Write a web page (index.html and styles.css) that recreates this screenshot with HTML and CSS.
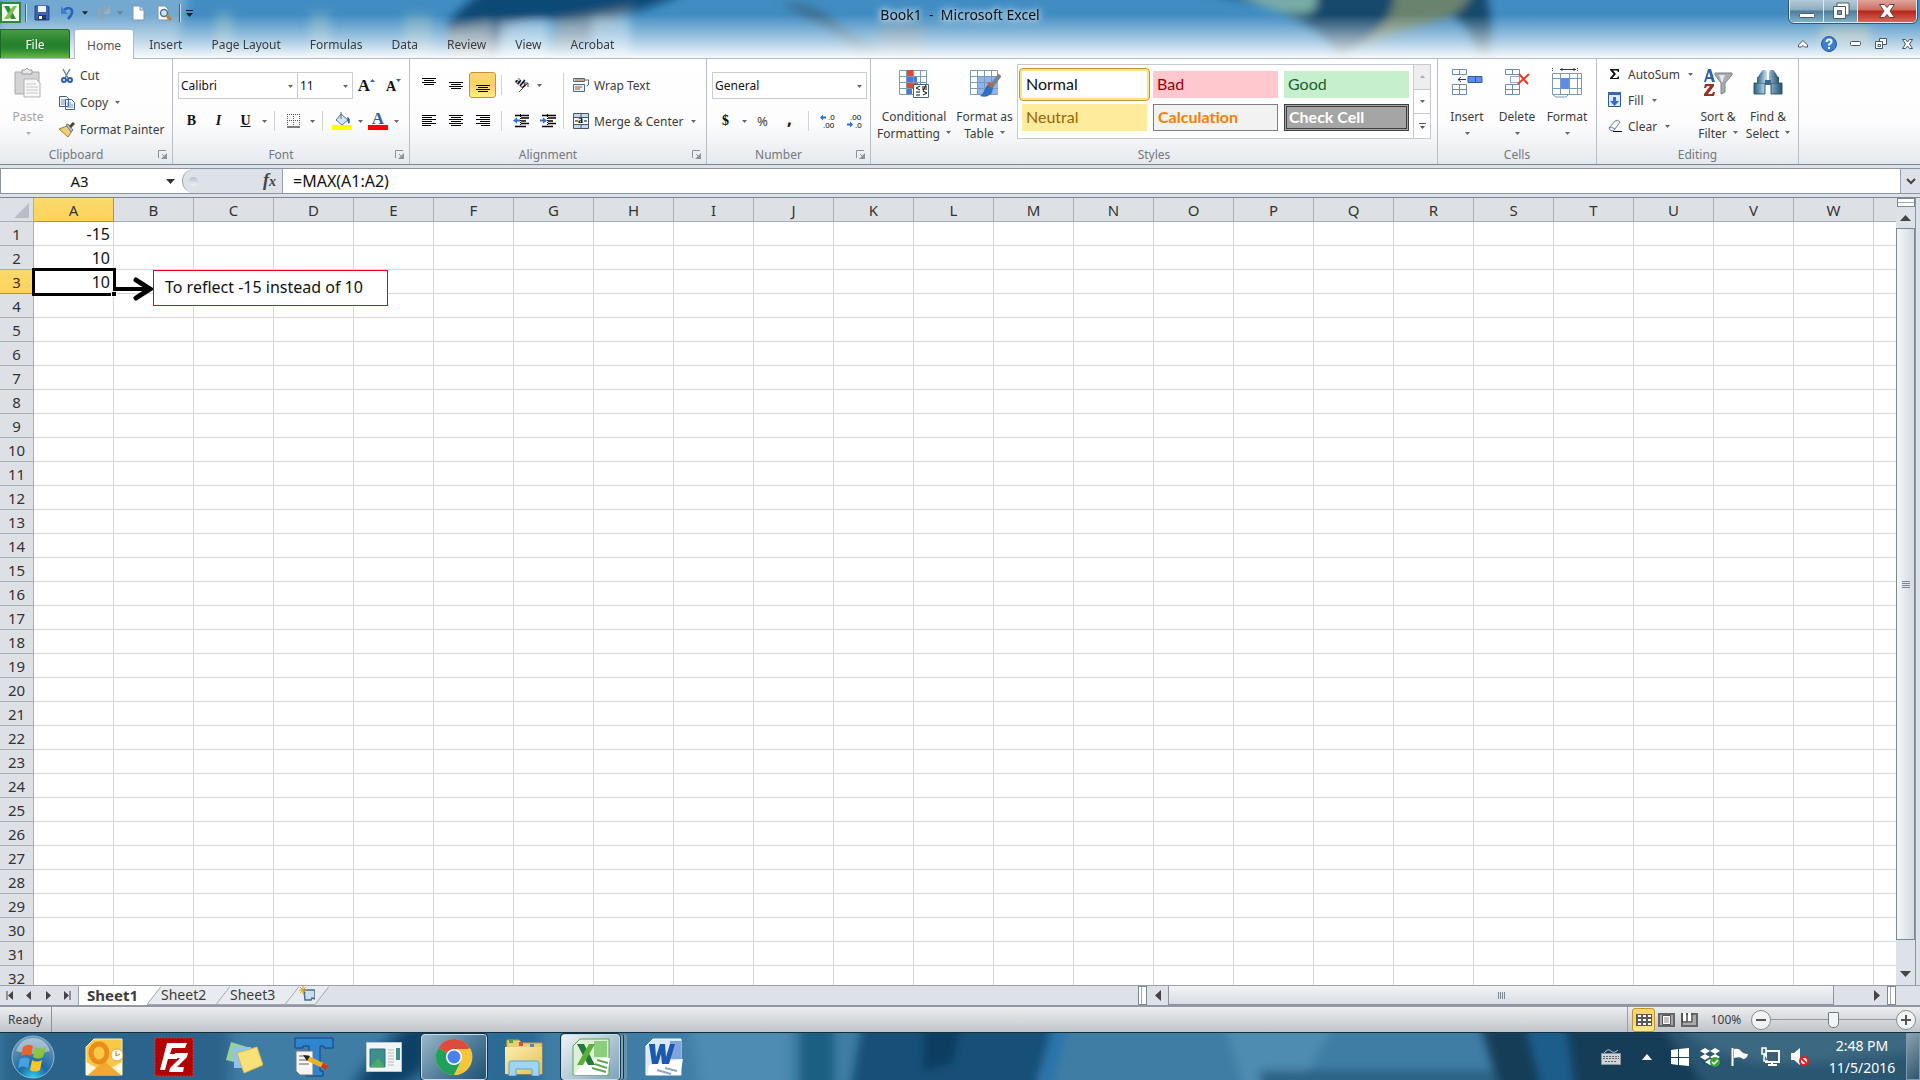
FILE: index.html
```html
<!DOCTYPE html>
<html lang="en">
<head>
    <meta charset="UTF-8">
    <title>Book1 - Microsoft Excel</title>
    <link rel="stylesheet" href="styles.css">
</head>
<body>
    <!-- shared icons -->
    <svg class="defs" aria-hidden="true">
        <defs>
            <symbol id="caret" viewBox="0 0 5 3"><path d="M0 0h5L2.500 3z" fill="#666"/></symbol>
            <symbol id="launcher" viewBox="0 0 10 10"><path d="M.5 8V.5H8" fill="none" stroke="#8b9099"/><path d="M4 4l2 2" stroke="#8b9099"/><path d="M9 3v6H3z" fill="#8b9099"/></symbol>
            <linearGradient id="steel" x1="0" y1="0" x2="1" y2="0"><stop offset="0" stop-color="#2c5f83"/><stop offset=".4" stop-color="#bcd9ea"/><stop offset="1" stop-color="#24506f"/></linearGradient>
            <linearGradient id="folder" x1="0" y1="0" x2="1" y2="1"><stop offset="0" stop-color="#fbeeb0"/><stop offset="1" stop-color="#e6bf57"/></linearGradient>
            <filter id="soft" x="-20%" y="-50%" width="140%" height="200%"><feGaussianBlur stdDeviation="7"/></filter>
            <filter id="soft2" x="-20%" y="-50%" width="140%" height="200%"><feGaussianBlur stdDeviation="5"/></filter>
        </defs>
    </svg>

    <header class="window_top">
        <svg class="glass" viewBox="0 0 1920 58" preserveAspectRatio="none" aria-hidden="true">
            <defs>
                <linearGradient id="fade" x1="0" y1="0" x2="0" y2="1"><stop offset=".25" stop-color="#fff" stop-opacity="0"/><stop offset=".7" stop-color="#fff" stop-opacity=".55"/><stop offset="1" stop-color="#fff" stop-opacity=".95"/></linearGradient>
            </defs>
            <rect width="1920" height="58" fill="#418dc3"/>
            <g filter="url(#soft2)">
                <path d="M0 -10h190l-20 80H0z" fill="#7fb0d3" opacity=".8"/>
                <path d="M215 12h18v50h-18zM310 12h20v50h-20zM404 14h28v50h-28z" fill="#9cc0bf" opacity=".4"/>
                <path d="M448 70V22C470 0 480 -10 490 -10H690C650 10 600 24 560 20 522 16 500 20 496 70z" fill="#0d4a74"/>
                <path d="M448 70V30l44-10v50zM556 20l80-14-40 30-40 20z" fill="#6f8796" opacity=".8"/>
                <path d="M500 22h48v50h-48zM592 18h38v40h-38z" fill="#a9cee4" opacity=".6"/>
                <path d="M780 4q30-4 50 14t50 32l-20 6q-20-22-44-34z" fill="#3d6f90"/>
                <path d="M880 24h44v36h-44z" fill="#6d8797" opacity=".6"/>
                <path d="M1195 -10h290q10 30 4 70h-10q-10-40-30-44-60 8-110 44-20-50-144-70z" fill="#12486c"/>
                <path d="M1235 -10h80q8 24-16 24-30 0-64-24z" fill="#79aba5"/>
                <path d="M1395 -10h78q-10 28-46 34-50 14-80 30 50-30 48-64z" fill="#6a836e"/>
                <path d="M1820 26h50v20h-50z" fill="#a8b7a5" opacity=".6"/>
            </g>
            <rect width="1920" height="58" fill="url(#fade)"/>
        </svg>

        <div class="title_bar">
            <div class="quick_bar">
                <svg width="22" height="22" viewBox="0 0 22 22"><rect x="1" y="1" width="19" height="19" fill="#f4faf2" stroke="#2c8a35" stroke-width="2"/><path d="M4 4h5l7 13h-5z" fill="#2d8f3c"/><path d="M13 4h4L9 17H4z" fill="#86c05a"/></svg>
                <i class="bar_line"></i>
                <button class="quick_btn" aria-label="Save"><svg width="16" height="16" viewBox="0 0 16 16"><path d="M1 1h13l1 1v13H1z" fill="#3c63b4" stroke="#24418a"/><path d="M4 1h8v6H4z" fill="#eef4fc"/><path d="M4 10h8v5H4z" fill="#1f3470"/><path d="M5 11h3v3H5z" fill="#fff"/></svg></button>
                <button class="quick_btn" aria-label="Undo"><svg width="16" height="16" viewBox="0 0 16 16"><path d="M4 5c5-4 9-1 8 3-1 3-3 5-4 6" fill="none" stroke="#2a62b8" stroke-width="2.500"/><path d="M1 1v8h7z" fill="#3f7fd2"/></svg></button>
                <svg class="quick_caret" width="6" height="4" viewBox="0 0 5 3"><path d="M0 0h5L2.500 3z" fill="#222"/></svg>
                <button class="quick_btn" aria-label="Redo"><svg width="16" height="16" viewBox="0 0 16 16"><path d="M12 5c-5-4-9-1-8 3 1 3 3 5 4 6" fill="none" stroke="#93a3b3" stroke-width="2.500"/><path d="M15 1v8H8z" fill="#9fadbb"/></svg></button>
                <svg class="quick_caret" width="6" height="4" viewBox="0 0 5 3"><path d="M0 0h5L2.500 3z" fill="#6c7f90"/></svg>
                <button class="quick_btn" aria-label="New"><svg width="16" height="16" viewBox="0 0 16 16"><path d="M3 1h7l4 4v10H3z" fill="#fff" stroke="#7d93ac"/><path d="M10 1v4h4" fill="#d5e0ec" stroke="#7d93ac"/></svg></button>
                <button class="quick_btn" aria-label="Print Preview"><svg width="16" height="16" viewBox="0 0 16 16"><path d="M2 1h7l3 3v11H2z" fill="#fff" stroke="#7d93ac"/><circle cx="8" cy="8" r="3.500" fill="#cfe3f3" stroke="#54728f" stroke-width="1.500"/><path d="M11 11l4 4" stroke="#c77a31" stroke-width="3"/></svg></button>
                <i class="bar_line"></i>
                <svg class="quick_more" width="7" height="8" viewBox="0 0 7 8"><path d="M0 1.500h7" stroke="#222"/><path d="M0 4h7L3.500 8z" fill="#222"/></svg>
            </div>
            <h1 class="window_title">Book1&nbsp; -&nbsp; Microsoft Excel</h1>
            <div class="window_btns">
                <button class="win_btn" aria-label="Minimize"><svg width="18" height="16" viewBox="0 0 18 16"><rect x="1.500" y="10.500" width="15" height="4" rx="1" fill="#fff" stroke="#4b5a68"/></svg></button>
                <button class="win_btn" aria-label="Restore"><svg width="18" height="18" viewBox="0 0 18 18"><path d="M5 1h12v12H5z" fill="#fff" stroke="#4b5a68"/><path d="M1.500 4.500h12v12h-12z" fill="#fff" stroke="#4b5a68"/><path d="M5.500 8.500h4v4h-4z" fill="#7d99ac" stroke="#4b5a68"/></svg></button>
                <button class="win_btn win_close" aria-label="Close"><svg width="18" height="16" viewBox="0 0 18 16"><path d="M1.500 1.500h5L9 4.500l2.500-3h5L12 8l4.500 6.500h-5L9 11.500l-2.500 3h-5L6 8z" fill="#fff" stroke="#5b4144"/></svg></button>
            </div>
        </div>

        <nav class="tab_bar">
            <button class="file_tab">File</button>
            <button class="tab active">Home</button>
            <button class="tab">Insert</button>
            <button class="tab">Page Layout</button>
            <button class="tab">Formulas</button>
            <button class="tab">Data</button>
            <button class="tab">Review</button>
            <button class="tab">View</button>
            <button class="tab">Acrobat</button>
            <div class="tab_tools">
                <button class="mini_btn" aria-label="Minimize ribbon"><svg width="10" height="8" viewBox="0 0 10 8"><path d="M.5 5L5 .5 9.500 5v2h-3L5 5.500 3.500 7h-3z" fill="#fff" stroke="#4c5661"/></svg></button>
                <button class="mini_btn" aria-label="Help"><svg width="16" height="16" viewBox="0 0 16 16"><circle cx="8" cy="8" r="7.500" fill="#3b7fd0" stroke="#2559a0"/><path d="M5.500 6c0-3.500 5.500-3.500 5 0C10.300 7.500 8 7.500 8 9.500" fill="none" stroke="#fff" stroke-width="2"/><path d="M7 11h2v2H7z" fill="#fff"/></svg></button>
                <button class="mini_btn" aria-label="Minimize workbook"><svg width="11" height="5" viewBox="0 0 11 5"><rect x=".5" y=".5" width="10" height="4" rx="1" fill="#fff" stroke="#4c5661"/></svg></button>
                <button class="mini_btn" aria-label="Restore workbook"><svg width="12" height="11" viewBox="0 0 12 11"><path d="M4.500.5h7v6h-7z" fill="#fff" stroke="#4c5661"/><path d="M.5 3.500h7v7h-7z" fill="#fff" stroke="#4c5661"/><path d="M3 6.500h2.500v2H3z" fill="none" stroke="#4c5661"/></svg></button>
                <button class="mini_btn" aria-label="Close workbook"><svg width="11" height="10" viewBox="0 0 11 10"><path d="M.5.5h3l2 2.500 2-2.500h3L7.500 5l3 4.500h-3L5.500 7l-2 2.500h-3l3-4.500z" fill="#fff" stroke="#4c5661"/></svg></button>
            </div>
        </nav>
    </header>

    <section class="ribbon">
        <div class="group clipboard">
            <div class="group_body">
                <button class="big_btn disabled">
                    <svg width="28" height="30" viewBox="0 0 28 30"><path d="M1 4h24v22H1z" fill="#d4d4d6" stroke="#aaa"/><path d="M8 2h3l2-2 2 2h3v4H8z" fill="#e9e9e9" stroke="#999"/><path d="M10 11h12l4 4v14H10z" fill="#f7f7f7" stroke="#b2b2b2"/><path d="M12 16h10M12 19h12M12 22h12M12 25h12" stroke="#c9c9c9"/></svg>
                    <span>Paste</span>
                    <svg class="caret"><use href="#caret"/></svg>
                </button>
                <div class="text_btns">
                    <button class="text_btn"><svg width="16" height="16" viewBox="0 0 16 16"><path d="M4 1l5 9M11 1L6 10" stroke="#6f8297" stroke-width="1.500"/><circle cx="5" cy="12" r="2" fill="none" stroke="#2a5db0" stroke-width="2"/><circle cx="11" cy="12" r="2" fill="none" stroke="#2a5db0" stroke-width="2"/></svg>Cut</button>
                    <button class="text_btn"><svg width="16" height="16" viewBox="0 0 16 16"><path d="M.5 1.500h7l2 2v8h-9zM6.500 4.500h6l3 3v7h-9z" fill="#f5f9fe" stroke="#3a5f9a"/><path d="M2 5h4M2 7h4M2 9h4M8 8h4M8 10h6M8 12h6" stroke="#6b93cc"/></svg>Copy<svg class="caret"><use href="#caret"/></svg></button>
                    <button class="text_btn"><svg width="16" height="16" viewBox="0 0 16 16"><path d="M0 7l8-3 5 5-4 6z" fill="#eed07a" stroke="#a67d2c"/><path d="M7 3l2-1 5 6-2 2z" fill="#b9c0c8" stroke="#6f7782"/><path d="M11 5l4-4" stroke="#5b3f2a" stroke-width="3"/></svg>Format Painter</button>
                </div>
            </div>
            <div class="group_foot"><span>Clipboard</span><button class="launcher" aria-label="Clipboard options"><svg><use href="#launcher"/></svg></button></div>
        </div>

        <div class="group font_group">
            <div class="group_body rows">
                <div class="row">
                    <span class="combo font_name"><select aria-label="Font"><option>Calibri</option></select><svg class="caret"><use href="#caret"/></svg></span>
                    <span class="combo font_size"><select aria-label="Font size"><option>11</option></select><svg class="caret"><use href="#caret"/></svg></span>
                    <button class="icon_btn grow" aria-label="Grow font"><b>A</b><svg width="5" height="3" viewBox="0 0 5 3"><path d="M0 3h5L2.500 0z" fill="#2d62b3"/></svg></button>
                    <button class="icon_btn shrink" aria-label="Shrink font"><b>A</b><svg width="5" height="3" viewBox="0 0 5 3"><path d="M0 0h5L2.500 3z" fill="#2d62b3"/></svg></button>
                </div>
                <div class="row">
                    <button class="icon_btn serif"><b>B</b></button>
                    <button class="icon_btn serif"><b><em>I</em></b></button>
                    <button class="icon_btn serif"><b><u>U</u></b></button>
                    <button class="drop_btn" aria-label="Underline styles"><svg class="caret"><use href="#caret"/></svg></button>
                    <i class="sep"></i>
                    <button class="icon_btn" aria-label="Borders"><svg width="14" height="14" viewBox="0 0 14 14"><path d="M.5 0v12M6.500 0v12M12.500 0v12M0 .5h13M0 6.500h13" stroke="#555" stroke-dasharray="1 1"/><path d="M0 13h13" stroke="#000"/></svg></button>
                    <button class="drop_btn" aria-label="Border styles"><svg class="caret"><use href="#caret"/></svg></button>
                    <i class="sep"></i>
                    <button class="icon_btn" aria-label="Fill color"><svg width="20" height="18" viewBox="0 0 20 18"><path d="M9 2l7 6-6 5-6-5z" fill="#d6e5f3" stroke="#4f6f8f"/><path d="M9 0v7" stroke="#4f6f8f"/><path d="M15 5c4 1 3 5 2 7-2-2-1-4-2-7z" fill="#2464b5"/><path d="M0 13h20v5H0z" fill="#ff0"/></svg></button>
                    <button class="drop_btn" aria-label="Fill colors"><svg class="caret"><use href="#caret"/></svg></button>
                    <button class="icon_btn font_color" aria-label="Font color"><b>A</b></button>
                    <button class="drop_btn" aria-label="Font colors"><svg class="caret"><use href="#caret"/></svg></button>
                </div>
            </div>
            <div class="group_foot"><span>Font</span><button class="launcher" aria-label="Font options"><svg><use href="#launcher"/></svg></button></div>
        </div>

        <div class="group align_group">
            <div class="group_body">
                <div class="rows">
                    <div class="row">
                        <button class="icon_btn" aria-label="Top align"><svg width="14" height="16" viewBox="0 0 14 16"><path d="M0 1.500h14M2 3.500h10M0 5.500h14M2 7.500h10" stroke="#000"/></svg></button>
                        <button class="icon_btn" aria-label="Middle align"><svg width="14" height="16" viewBox="0 0 14 16"><path d="M0 5.500h14M2 7.500h10M0 9.500h14M2 11.500h10" stroke="#000"/></svg></button>
                        <button class="icon_btn pressed" aria-label="Bottom align"><svg width="14" height="16" viewBox="0 0 14 16"><path d="M0 8.500h14M2 10.500h10M0 12.500h14M2 14.500h10" stroke="#000"/></svg></button>
                        <i class="sep"></i>
                        <button class="icon_btn" aria-label="Orientation"><svg width="20" height="20" viewBox="0 0 20 20"><text x="3" y="10" transform="rotate(40 8 9)" font-family="Liberation Serif, serif" font-weight="bold" font-size="11">ab</text><path d="M8 17l9-9M13 8h4v4" fill="none" stroke="#444"/></svg></button>
                        <button class="drop_btn" aria-label="Orientation options"><svg class="caret"><use href="#caret"/></svg></button>
                    </div>
                    <div class="row">
                        <button class="icon_btn" aria-label="Align left"><svg width="14" height="12" viewBox="0 0 14 12"><path d="M0 .5h14M0 2.500h10M0 4.500h14M0 6.500h10M0 8.500h14M0 10.500h9" stroke="#000"/></svg></button>
                        <button class="icon_btn" aria-label="Center"><svg width="14" height="12" viewBox="0 0 14 12"><path d="M0 .5h14M2 2.500h10M0 4.500h14M2 6.500h10M0 8.500h14M2 10.500h10" stroke="#000"/></svg></button>
                        <button class="icon_btn" aria-label="Align right"><svg width="14" height="12" viewBox="0 0 14 12"><path d="M0 .5h14M4 2.500h10M0 4.500h14M4 6.500h10M0 8.500h14M5 10.500h9" stroke="#000"/></svg></button>
                        <i class="sep"></i>
                        <button class="icon_btn" aria-label="Decrease indent"><svg width="16" height="14" viewBox="0 0 16 14"><path d="M2 1.500h14M8 4h8M8 7h5M8 9.500h8M2 12.500h11" stroke="#000" stroke-width="1.500"/><path d="M7.500 0v14" stroke="#000" stroke-dasharray="1 1"/><path d="M0 6.500l4-3v2h3v2H4v2z" fill="#2b6be0"/></svg></button>
                        <button class="icon_btn" aria-label="Increase indent"><svg width="16" height="14" viewBox="0 0 16 14"><path d="M2 1.500h14M8 4h8M8 7h5M8 9.500h8M2 12.500h11" stroke="#000" stroke-width="1.500"/><path d="M7.500 0v14" stroke="#000" stroke-dasharray="1 1"/><path d="M7 6.500l-4-3v2H0v2h3v2z" fill="#2b6be0"/></svg></button>
                    </div>
                </div>
                <i class="sep tall"></i>
                <div class="rows wide_btns">
                    <button class="text_btn"><svg width="16" height="16" viewBox="0 0 16 16"><path d="M.5 1.500h11v3H.5zM.5 7.500h11v7H.5z" fill="#e3eef5" stroke="#4b6b84"/><path d="M2 3h14" stroke="#a6562e"/><path d="M2 10h7M2 12h5" stroke="#a6562e"/><path d="M15.500 3v5l-2 1" fill="none" stroke="#4b6b84"/></svg>Wrap Text</button>
                    <button class="text_btn"><svg width="16" height="16" viewBox="0 0 16 16"><path d="M.5.5h15v15H.5z" fill="#c5d9ea" stroke="#41566b"/><path d="M1 4.500h14M1 11.500h14M8 1v3M8 12v3" stroke="#41566b"/><path d="M1 5h14v6H1z" fill="#fff"/><path d="M2 8h3M11 8h3" stroke="#000"/><text x="5" y="10" font-family="Liberation Serif, serif" font-weight="bold" font-size="10">a</text></svg>Merge &amp; Center<svg class="caret"><use href="#caret"/></svg></button>
                </div>
            </div>
            <div class="group_foot"><span>Alignment</span><button class="launcher" aria-label="Alignment options"><svg><use href="#launcher"/></svg></button></div>
        </div>

        <div class="group number_group">
            <div class="group_body rows">
                <div class="row"><span class="combo number_format"><select aria-label="Number format"><option>General</option></select><svg class="caret"><use href="#caret"/></svg></span></div>
                <div class="row">
                    <button class="icon_btn serif"><b>$</b></button>
                    <button class="drop_btn" aria-label="Currency options"><svg class="caret"><use href="#caret"/></svg></button>
                    <button class="icon_btn percent">%</button>
                    <button class="icon_btn comma"><b>,</b></button>
                    <i class="sep"></i>
                    <button class="icon_btn" aria-label="Increase decimal"><svg width="18" height="18" viewBox="0 0 18 18"><path d="M1 5.500l3-3v2h3v2H4v2z" fill="#2b6be0"/><text x="9" y="8" font-family="Liberation Sans, sans-serif" font-size="8">.0</text><text x="4" y="16" font-family="Liberation Sans, sans-serif" font-size="8">.00</text></svg></button>
                    <button class="icon_btn" aria-label="Decrease decimal"><svg width="18" height="18" viewBox="0 0 18 18"><path d="M7 12.500l-3-3v2H1v2h3v2z" fill="#2b6be0"/><text x="4" y="8" font-family="Liberation Sans, sans-serif" font-size="8">.00</text><text x="9" y="16" font-family="Liberation Sans, sans-serif" font-size="8">.0</text></svg></button>
                </div>
            </div>
            <div class="group_foot"><span>Number</span><button class="launcher" aria-label="Number options"><svg><use href="#launcher"/></svg></button></div>
        </div>

        <div class="group styles_group">
            <div class="group_body">
                <button class="big_btn cond_btn">
                    <svg width="32" height="30" viewBox="0 0 32 30"><path d="M1.500 2.500h27v24h-27z" fill="#fff" stroke="#7b9bb5"/><path d="M8 2h7v6H8zM8 14h12v6H8z" fill="#e4472f"/><path d="M8 8h11v6H8zM8 20h6v6H8z" fill="#4a78d8"/><path d="M8.500 2v24M15.500 2v24M22.500 2v24M1 8.500h28M1 14.500h28M1 20.500h28" stroke="#7b9bb5" fill="none"/><path d="M15.500 16.500h15v13h-15z" fill="#fff" stroke="#47647d"/><path d="M22 18l-4 2 4 2M18 24h4M18 27h4M24 19h5M24 21h5M28 17l-3 6M25 23l4 2-4 2" fill="none" stroke="#111"/></svg>
                    <span>Conditional<br>Formatting<svg class="caret"><use href="#caret"/></svg></span>
                </button>
                <button class="big_btn table_btn">
                    <svg width="32" height="30" viewBox="0 0 32 30"><path d="M1.500 2.500h27v24h-27z" fill="#fff" stroke="#7b9bb5"/><path d="M8 8h21v18H8z" fill="#8fb2f2"/><path d="M8.500 2v24M15.500 2v24M22.500 2v24M1 8.500h28M1 14.500h28M1 20.500h28" stroke="#7b9bb5"/><path d="M31 7L21 20" stroke="#7d7f84" stroke-width="4"/><path d="M22 18l-3-1c-4 2-3 8-8 11 6 2 12 0 13-8z" fill="#2f6ec0"/><path d="M24 19l-5-4" stroke="#b8653a" stroke-width="3"/></svg>
                    <span>Format as<br>Table<svg class="caret"><use href="#caret"/></svg></span>
                </button>
                <div class="gallery">
                    <div class="gallery_items">
                        <button class="style_item normal">Normal</button>
                        <button class="style_item bad">Bad</button>
                        <button class="style_item good">Good</button>
                        <button class="style_item neutral">Neutral</button>
                        <button class="style_item calculation">Calculation</button>
                        <button class="style_item check_cell">Check Cell</button>
                    </div>
                    <div class="gallery_scroll">
                        <button class="gray" aria-label="Scroll styles up"><svg width="5" height="3" viewBox="0 0 5 3"><path d="M0 3h5L2.500 0z" fill="#aaa"/></svg></button>
                        <button aria-label="Scroll styles down"><svg class="caret"><use href="#caret"/></svg></button>
                        <button aria-label="More styles"><svg width="7" height="6" viewBox="0 0 7 6"><path d="M0 .5h7" stroke="#555"/><path d="M1 3h5L3.500 6z" fill="#555"/></svg></button>
                    </div>
                </div>
            </div>
            <div class="group_foot"><span>Styles</span></div>
        </div>

        <div class="group cells_group">
            <div class="group_body">
                <button class="big_btn">
                    <svg width="32" height="30" viewBox="0 0 32 30"><path d="M1.500 1.500h14v5h-14zM1.500 16.500h14v10h-14zM8.500 1v6M8.500 16v11M1 21.500h15" fill="#fff" stroke="#6d8ca5"/><path d="M17 8.500h14v6H17zM24.500 8v7" fill="#5e8ce8" stroke="#3059a8"/><path d="M7 11.500h8M10 9l-3 2.500L10 14" fill="none" stroke="#223b55"/></svg>
                    <span>Insert</span><svg class="caret"><use href="#caret"/></svg>
                </button>
                <button class="big_btn">
                    <svg width="32" height="30" viewBox="0 0 32 30"><path d="M4.500 1.500h14v5h-14zM4.500 16.500h14v10h-14zM11.500 1v6M11.500 16v11M4 21.500h15" fill="#fff" stroke="#6d8ca5"/><path d="M9.500 8.500h9v6h-9z" fill="none" stroke="#2b4fa0" stroke-dasharray="1 1"/><path d="M18 6l9 10M28 6L17 16" stroke="#e83a22" stroke-width="2"/></svg>
                    <span>Delete</span><svg class="caret"><use href="#caret"/></svg>
                </button>
                <button class="big_btn">
                    <svg width="32" height="30" viewBox="0 0 32 30"><path d="M1.500 5.500h29v21h-29zM9.500 5v22M18.500 5v22M26.500 5v22M1 10.500h30M1 20.500h30" fill="#fff" stroke="#7b9bb5"/><path d="M10 10h8v11h-8z" fill="#5e8ce8"/><path d="M1.500 0v4M26.500 0v4" stroke="#223b55" stroke-dasharray="1 1"/><path d="M9 1.500h16M11 0v3M23 0v3" stroke="#223b55"/><path d="M2 27l3 2h10l2-2" fill="none" stroke="#7b9bb5"/></svg>
                    <span>Format</span><svg class="caret"><use href="#caret"/></svg>
                </button>
            </div>
            <div class="group_foot"><span>Cells</span></div>
        </div>

        <div class="group editing_group">
            <div class="group_body">
                <div class="text_btns">
                    <button class="text_btn"><svg width="14" height="16" viewBox="0 0 14 16"><path d="M2 3h9v3h-1l-1-1.500H5L8 8l-3.500 4H9l1-1.500h1V13H2v-1l3.500-4L2 4z" fill="#111"/></svg>AutoSum<svg class="caret"><use href="#caret"/></svg></button>
                    <button class="text_btn"><svg width="14" height="16" viewBox="0 0 14 16"><path d="M.5.5h12v14H.5z" fill="#dfeafa" stroke="#2e56a5"/><path d="M0 0h13v3H0z" fill="#3c66b8"/><path d="M5 5h3v4h3l-4.500 5L2 9h3z" fill="#2f6ad6"/></svg>Fill<svg class="caret"><use href="#caret"/></svg></button>
                    <button class="text_btn"><svg width="14" height="16" viewBox="0 0 14 16"><path d="M1 10l6-7q3-2 5 1L7 11q-1 2-3 2T1 10z" fill="#f4f8fd" stroke="#6e7f96"/><path d="M1 10q2-2 6 1" fill="none" stroke="#6e7f96"/><path d="M5 13.500h9" stroke="#111"/></svg>Clear<svg class="caret"><use href="#caret"/></svg></button>
                </div>
                <button class="big_btn">
                    <svg width="32" height="30" viewBox="0 0 32 30"><path d="M13 5h17v2l-7 8v9l-4 2V15l-6-8z" fill="#a9adb2" stroke="#7c8086"/><path d="M17 7h6l-3 8z" fill="#e4e6e8"/><path d="M2 14L6 1h3l4 13h-3L9 11H5l-1 3zM5.500 9h3L7 4z" fill="#2e62ad"/><path d="M3 16h9v2l-6 8h4l1-2h2l-1 4H2v-2l6-8H5l-1 2H2z" fill="#9c2f24"/></svg>
                    <span>Sort &amp;<br>Filter<svg class="caret"><use href="#caret"/></svg></span>
                </button>
                <button class="big_btn">
                    <svg width="32" height="30" viewBox="0 0 32 30"><path d="M9 4l2-2h3l1 3v10H6V9zM17 5l1-3h3l2 2 3 5v6h-9z" fill="url(#steel)"/><path d="M2 15h11v11H2zM19 15h11v11H19z" fill="url(#steel)" stroke="#2b5877"/><path d="M5 9h9v6H5zM18 9h9v6h-9z" fill="url(#steel)"/><path d="M13 12h6v5h-6z" fill="#3b6c8d"/></svg>
                    <span>Find &amp;<br>Select<svg class="caret"><use href="#caret"/></svg></span>
                </button>
            </div>
            <div class="group_foot"><span>Editing</span></div>
        </div>
    </section>

    <section class="formula_bar">
        <div class="name_box">
            <input type="text" value="A3" aria-label="Name box">
            <button aria-label="Names"><svg width="9" height="5" viewBox="0 0 9 5"><path d="M0 0h9L4.500 5z" fill="#333"/></svg></button>
        </div>
        <div class="fx_box"><i class="fx_dot"></i><button class="fx_btn"><i>f</i><small>x</small></button></div>
        <input class="formula_input" type="text" value="=MAX(A1:A2)" aria-label="Formula">
        <button class="expand_btn" aria-label="Expand formula bar"><svg width="10" height="7" viewBox="0 0 10 7"><path d="M1 1l4 4 4-4" fill="none" stroke="#444" stroke-width="2"/></svg></button>
    </section>

    <main class="sheet_area">
        <div class="sheet">
            <table class="cells">
                <thead><tr id="col_heads"><th class="corner"><svg width="15" height="15" viewBox="0 0 15 15"><path d="M15 0v15H0z" fill="#b9bec6"/></svg></th></tr></thead>
                <tbody id="rows"></tbody>
            </table>
            <svg class="arrow" width="40" height="24" viewBox="0 0 40 24"><path d="M0 12h30" stroke="#000" stroke-width="4"/><path d="M20 3l14 9-14 9" fill="none" stroke="#000" stroke-width="5" stroke-linecap="round"/></svg>
            <div class="note">To reflect -15 instead of 10</div>
        </div>
        <div class="v_scroll">
            <i class="split_h"></i>
            <button aria-label="Scroll up"><svg width="11" height="6" viewBox="0 0 11 6"><path d="M0 6h11L5.500 0z" fill="#444"/></svg></button>
            <div class="v_thumb"><i></i><i></i><i></i><i></i></div>
            <button class="v_down" aria-label="Scroll down"><svg width="11" height="6" viewBox="0 0 11 6"><path d="M0 0h11L5.500 6z" fill="#444"/></svg></button>
        </div>
    </main>

    <section class="sheet_bar">
        <div class="sheet_nav">
            <button aria-label="First sheet"><svg width="8" height="9" viewBox="0 0 8 9"><path d="M1 0v9" stroke="#444"/><path d="M7 0v9L2 4.500z" fill="#444"/></svg></button>
            <button aria-label="Previous sheet"><svg width="8" height="9" viewBox="0 0 8 9"><path d="M6 0v9L1 4.500z" fill="#444"/></svg></button>
            <button aria-label="Next sheet"><svg width="8" height="9" viewBox="0 0 8 9"><path d="M2 0v9l5-4.500z" fill="#444"/></svg></button>
            <button aria-label="Last sheet"><svg width="8" height="9" viewBox="0 0 8 9"><path d="M7 0v9" stroke="#444"/><path d="M1 0v9l5-4.500z" fill="#444"/></svg></button>
        </div>
        <div class="sheet_tabs">
            <button class="sheet_tab current">Sheet1</button>
            <svg class="slant" viewBox="0 0 14 19"><path d="M0 0h14L0 18z" fill="#fff"/><path d="M14 0v18H0z" fill="#e8ebf0"/><path d="M0 18.500L14 .5M0 18.500h14" stroke="#a3a9b3" fill="none"/></svg>
            <button class="sheet_tab">Sheet2</button>
            <svg class="slant" viewBox="0 0 14 19"><path d="M0 0h14v19H0z" fill="#e8ebf0"/><path d="M0 18.500L14 .5M0 18.500h14" stroke="#a3a9b3" fill="none"/></svg>
            <button class="sheet_tab">Sheet3</button>
            <svg class="slant" viewBox="0 0 14 19"><path d="M0 0h14v19H0z" fill="#e8ebf0"/><path d="M0 18.500L14 .5M0 18.500h14" stroke="#a3a9b3" fill="none"/></svg>
            <button class="sheet_tab add_tab" aria-label="Insert worksheet"><svg width="18" height="16" viewBox="0 0 18 16"><path d="M5 4h11v9l-3-1-1 2H6z" fill="#c9dded" stroke="#4a6d8c" stroke-width="1.500"/><path d="M4 0v8M0 4h8M1 1l6 6M7 1L1 7" stroke="#e09a2c"/></svg></button>
            <svg class="slant" viewBox="0 0 14 19"><path d="M0 0h14L0 18z" fill="#e8ebf0"/><path d="M0 18.500L14 .5" stroke="#a3a9b3" fill="none"/></svg>
        </div>
        <div class="h_scroll">
            <i class="split_v"></i>
            <button aria-label="Scroll left"><svg width="6" height="11" viewBox="0 0 6 11"><path d="M6 0v11L0 5.500z" fill="#444"/></svg></button>
            <div class="h_thumb"><i></i><i></i><i></i><i></i></div>
            <button class="h_right" aria-label="Scroll right"><svg width="6" height="11" viewBox="0 0 6 11"><path d="M0 0v11l6-5.500z" fill="#444"/></svg></button>
            <i class="split_v"></i>
        </div>
    </section>

    <footer class="status_bar">
        <span class="ready">Ready</span>
        <div class="view_tools">
            <button class="view_btn pressed" aria-label="Normal view"><svg width="16" height="12" viewBox="0 0 16 12"><path d="M0 0h16v12H0z" fill="#5a5a5a"/><path d="M2 1h3v2H2zM7 1h3v2H7zM12 1h3v2h-3zM2 5h3v2H2zM7 5h3v2H7zM12 5h3v2h-3zM2 9h3v2H2zM7 9h3v2H7zM12 9h3v2h-3z" fill="#fff"/></svg></button>
            <button class="view_btn" aria-label="Page layout view"><svg width="17" height="14" viewBox="0 0 17 14"><path d="M1 1h15v12H1z" fill="#a9a9a9" stroke="#666" stroke-width="2"/><path d="M4.500 2.500h8v9h-8z" fill="#fff" stroke="#555"/><path d="M6 5h5M6 7h5M6 9h5" stroke="#888"/></svg></button>
            <button class="view_btn" aria-label="Page break preview"><svg width="17" height="14" viewBox="0 0 17 14"><path d="M1 1h15v12H1z" fill="#a9a9a9" stroke="#666" stroke-width="2"/><path d="M2 0h3v8H2zM7 0h3v8H7z" fill="#fff"/><path d="M1 0v9M6 0v9M11 0v9M1 9h10" stroke="#444"/></svg></button>
            <span class="zoom_text">100%</span>
            <button class="zoom_btn" aria-label="Zoom out"><svg width="10" height="10" viewBox="0 0 10 10"><path d="M0 5h10" stroke="#555" stroke-width="2"/></svg></button>
            <input class="zoom_range" type="range" min="0" max="100" value="50" aria-label="Zoom">
            <button class="zoom_btn" aria-label="Zoom in"><svg width="10" height="10" viewBox="0 0 10 10"><path d="M0 5h10M5 0v10" stroke="#555" stroke-width="2"/></svg></button>
        </div>
    </footer>

    <footer class="taskbar">
        <svg class="glass" viewBox="0 0 1920 48" preserveAspectRatio="none" aria-hidden="true">
            <rect width="1920" height="48" fill="#407da5"/>
            <g filter="url(#soft)">
                <path d="M0 -10h230v70H0z" fill="#2c648b"/>
                <path d="M350 60q30-50 60-70h20v40q-20 30-60 30z" fill="#0e4166"/>
                <path d="M480 -10h60v70h-60z" fill="#2c6b94"/>
                <path d="M690 -10h100v70h-90z" fill="#4f8cb4"/>
            </g>
            <g filter="url(#soft2)">
                <path d="M800 -10h34v70h-34z" fill="#1f5e84"/>
                <path d="M862 -10h192l-20 70H850z" fill="#164f78"/>
                <path d="M925 -10h36l-8 40-30 10z" fill="#0b3c60"/>
                <path d="M1052 -10h16l-16 70h-14z" fill="#2c74aa"/>
                <path d="M1225 -10h110l-40 70h-50z" fill="#508cb2"/>
                <path d="M1260 38h240v20h-240z" fill="#2a6485"/>
                <path d="M1480 -10h440v70h-420z" fill="#123c58"/>
                <path d="M1525 -10h40l10 70h-32z" fill="#1c5d8c"/>
                <path d="M1660 -10h280v70h-230z" fill="#2b5672"/>
                <path d="M1680 -10h260v24q-100 20-180 16-60-10-80-40z" fill="#3d6781"/>
            </g>
        </svg>
        <div class="tasks">
            <button class="start_btn" aria-label="Start"><svg width="44" height="44" viewBox="0 0 44 44"><defs><radialGradient id="orb" cx=".5" cy="1" r=".9"><stop offset="0" stop-color="#2fd0f4"/><stop offset=".4" stop-color="#1a6aa3"/><stop offset="1" stop-color="#6d97b4"/></radialGradient></defs><circle cx="22" cy="22" r="21" fill="url(#orb)" stroke="#8fb6cf"/><path d="M5 16q5-13 17-13t17 13q-17 6-34 0z" fill="#fff" opacity=".4"/><path d="M12 12q5-4 10-1l-2 10q-5-3-10 0z" fill="#e8622a"/><path d="M24 12q5 3 11 0l-3 10q-5 3-10 0z" fill="#8cc43f"/><path d="M9 24q5-3 10 0l-2 9q-5-3-10 0z" fill="#4a9fe0"/><path d="M21 25q5 3 10 0l-2 10q-5 3-10 0z" fill="#fbc52c"/></svg></button>
            <button class="task" aria-label="Outlook"><svg width="38" height="38" viewBox="0 0 38 38"><path d="M1 9l8-8h28v36H1z" fill="#f9c846" stroke="#fff0c0"/><path d="M1 24l18 10 18-10v13H1z" fill="#fff6dc"/><path d="M3 37l16-14 17 14z" fill="#f3a833"/><ellipse cx="14" cy="15" rx="8" ry="9" fill="none" stroke="#e88d18" stroke-width="5"/><circle cx="32" cy="17" r="6" fill="#fff" stroke="#e2a23a"/><path d="M31 13v5l4-2" fill="none" stroke="#c27716"/></svg></button>
            <button class="task" aria-label="FileZilla"><svg width="40" height="40" viewBox="0 0 40 40"><path d="M1 1h38v38H1z" fill="#b30000" stroke="#d33" stroke-dasharray="2 1"/><path d="M10 6h20l-2 5H15l-2 6h9l-2 5h-9L8 33H3z" transform="translate(3 0)" fill="#fff"/><path d="M21 16h13l-1 4-10 10h7l-1 5H15l1-4 10-10h-6z" fill="#fff"/></svg></button>
            <button class="task" aria-label="Sticky Notes"><svg width="38" height="34" viewBox="0 0 38 34"><path d="M6 2l16 5-5 17-16-4z" fill="#97cf9f"/><path d="M9 7h17v21H9z" fill="#8fc2ee"/><path d="M12 13l20-6 6 18-19 8z" fill="#f8e17a" stroke="#d8b84a"/></svg></button>
            <button class="task" aria-label="Text Editor"><svg width="40" height="40" viewBox="0 0 40 40"><path d="M1 1h38v10h-9V9h-4v25h3v5H12v-5h3V9H9v2H1z" fill="#2f86cf" stroke="#123f86"/><path d="M2 14h17v24H6l-4-4z" fill="#f5f5f5" stroke="#777"/><path d="M5 19h10M5 23h10M5 27h10" stroke="#666"/><path d="M13 21l19 9" stroke="#f0b020" stroke-width="5"/><path d="M28 28l5 3" stroke="#c43c30" stroke-width="5"/><path d="M9 18l7 1-3 5z" fill="#222"/></svg></button>
            <button class="task" aria-label="App Window"><svg width="36" height="30" viewBox="0 0 36 30"><path d="M.5.5h35v29H.5z" fill="#f2f5f5" stroke="#bcc6ca"/><path d="M4 7h15v18H4z" fill="#3d8f8a" stroke="#39668c"/><path d="M4 25l8-9 7 9z" fill="#4cab68"/><path d="M22 8h6M22 11h6M22 14h6M22 17h6M22 20h6M22 23h6" stroke="#bbb"/><path d="M30 6h4v12h-4z" fill="#3d8f8a"/></svg></button>
            <button class="task open" aria-label="Chrome"><svg width="38" height="38" viewBox="0 0 38 38"><circle cx="19" cy="19" r="18" fill="#f5c53b"/><path d="M19 19L3.400 10A18 18 0 0 1 34.600 10z" fill="#de4b3c"/><path d="M19 19L3.400 10A18 18 0 0 0 19 37l7-14z" fill="#1fa05b"/><path d="M19 11h16.500a18 18 0 0 1-16.500 26l7-14z" fill="#f5c53b"/><circle cx="19" cy="19" r="8" fill="#fff"/><circle cx="19" cy="19" r="6.500" fill="#4a82f0"/></svg></button>
            <button class="task" aria-label="Explorer"><svg width="40" height="38" viewBox="0 0 40 38"><path d="M3 2h12l3 3h20v31H2z" fill="#e9cd74" stroke="#c49d3d"/><path d="M5 1h4v4H5z" fill="#4fa34f"/><path d="M15 4h4v4h-4z" fill="#d04f45"/><path d="M26 6h4v4h-4z" fill="#4d86c9"/><path d="M1 9h37v27H1z" fill="url(#folder)"/><path d="M5 25q0-2 2-2h26q2 0 2 2v13h-7v-7H12v7H5z" fill="#9fd5f0" stroke="#5aa7d1"/></svg></button>
            <button class="task open stacked" aria-label="Excel"><svg width="38" height="38" viewBox="0 0 38 38"><path d="M1 8l7-7h29v36H1z" fill="#dff0da" stroke="#5aa653"/><path d="M22 3h13v16H22z" fill="#8bcf7c"/><path d="M14 22l24-2-3 17H2z" fill="#fff"/><path d="M25 22l11 3M23 26l12 4M20 30l14 4" stroke="#62a758" stroke-width="2"/><path d="M5 6h7l11 21h-7z" fill="#237a3a"/><path d="M17 6h6L11 27H5z" fill="#5cb038"/></svg></button>
            <button class="task" aria-label="Word"><svg width="38" height="38" viewBox="0 0 38 38"><path d="M1 8l7-7h28v36H1z" fill="#dbe8f6" stroke="#f3f8fd"/><path d="M25 3h11v18H25z" fill="#7fa5dd"/><path d="M4 27l34-6-3 16H2z" fill="#fff"/><path d="M20 30l12 3M12 32l14 4" stroke="#89a8cf" stroke-width="2"/><path d="M4 6h6l1 13 4-13h5l1 13 4-13h5l-6 20h-7l-1-10-3 10H7z" fill="#1c58b0"/></svg></button>
        </div>
        <div class="tray">
            <div class="tray_icons">
                <svg width="20" height="16" viewBox="0 0 20 16"><path d="M3 4q4-5 7-2t7-1" fill="none" stroke="#b8c2c8"/><path d="M.5 4.500h19v11H.5z" fill="#cfd3d5" stroke="#8d979d"/><path d="M2 7.500h16M2 9.500h16M4 12.500h12" stroke="#5c666d" stroke-dasharray="2 1"/></svg>
                <svg width="10" height="6" viewBox="0 0 10 6"><path d="M0 6h10L5 0z" fill="#fff"/></svg>
                <svg width="20" height="20" viewBox="0 0 20 20"><path d="M1 3l7-1v8H1zM9 2l10-1v9H9zM1 11h7v7l-7-1zM9 11h10v8L9 18z" fill="#fff"/></svg>
                <svg width="20" height="20" viewBox="0 0 20 20"><path d="M5 1l5 3-5 3-5-3zM15 1l5 3-5 3-5-3zM5 7l5 3-5 3-5-3zM15 7l5 3-5 3-5-3zM10 12l5 3-5 3-5-3z" fill="#fff"/><circle cx="15" cy="15" r="5" fill="#3aa335"/><path d="M12 15l2 2 4-4" fill="none" stroke="#fff" stroke-width="1.500"/></svg>
                <svg width="20" height="20" viewBox="0 0 20 20"><path d="M2.500 1v18" stroke="#fff" stroke-width="2"/><path d="M4 2q5-1 7 2t7 3q-1 5-5 5-2-3-9-1z" fill="#fff"/></svg>
                <svg width="20" height="20" viewBox="0 0 20 20"><path d="M6 4h13v11H6z" fill="#3a6078" stroke="#fff" stroke-width="2"/><path d="M8 18h9M12 15v3" stroke="#fff" stroke-width="2"/><path d="M2 1h4v6H2zM4 7v7h4" fill="#51758c" stroke="#fff" stroke-width="1.500"/></svg>
                <svg width="20" height="20" viewBox="0 0 20 20"><path d="M1 6h3l6-5v17l-6-5H1z" fill="#fff"/><circle cx="14" cy="14" r="4" fill="#fff" stroke="#e02020" stroke-width="2"/><path d="M11 11l6 6" stroke="#e02020" stroke-width="2"/></svg>
            </div>
            <time class="clock">2:48 PM<br>11/5/2016</time>
            <button class="show_desktop" aria-label="Show desktop"></button>
        </div>
    </footer>
    <script src="script.js"></script>
</body>
</html>
```
FILE: styles.css
```css
* {
    margin: 0;
    padding: 0;
    box-sizing: border-box;
}
html, body {
    height: 100%;
}
body {
    display: flex;
    flex-direction: column;
    overflow: hidden;
    background-color: #dde1e8;
    color: #3c3c3c;
    font-family: "Noto Sans", "Open Sans", sans-serif;
    font-size: 12px;
}
button, input, select {
    border: 0;
    background: none;
    color: inherit;
    font: inherit;
}
svg {
    display: block;
    flex: none;
}
.defs {
    position: absolute;
    width: 0;
    height: 0;
}
.caret {
    width: 5px;
    height: 3px;
}
/* title bar */
.window_top, .taskbar {
    position: relative;
    flex: none;
    isolation: isolate;
}
.glass {
    position: absolute;
    inset: 0;
    width: 100%;
    height: 100%;
    z-index: -1;
}
.title_bar {
    display: grid;
    grid-template-columns: 1fr auto 1fr;
    height: 29px;
}
.quick_bar {
    display: flex;
    align-items: center;
    padding: 0 0 3px 0;
}
.bar_line {
    width: 1px;
    height: 18px;
    margin-left: 3px;
    background-color: #3c6383;
    box-shadow: 1px 0 #c4dcec;
}
.quick_btn {
    display: flex;
    justify-content: center;
    width: 24px;
    margin-left: 2px;
}
.bar_line + .quick_btn {
    margin-left: 4px;
}
.quick_caret {
    margin: 0 1px 0 2px;
}
.quick_more {
    margin-left: 6px;
}
.window_title {
    padding-top: 5px;
    font-size: 14px;
    font-weight: normal;
    line-height: 20px;
    color: #111;
    text-shadow: 0 0 6px #fff, 0 0 10px #fff;
}
.window_btns {
    display: flex;
    justify-self: end;
    height: 23px;
    margin-right: 3px;
    border: 1px solid #dce9f2;
    border-top: 0;
    border-radius: 0 0 5px 5px;
    outline: 1px solid #3a5468;
    overflow: hidden;
}
.win_btn {
    display: flex;
    align-items: center;
    justify-content: center;
    width: 34px;
    background: linear-gradient(#b5cbd8, #8bacc0 45%, #4d7d99 50%, #7fb0c8);
    border-right: 1px solid #dce9f2;
}
.win_close {
    width: 58px;
    border: 0;
    background: linear-gradient(#e0a59a, #cf6b5e 45%, #b5261a 50%, #d4675a);
}
/* ribbon tabs */
.tab_bar {
    display: flex;
    height: 29px;
    padding-right: 5px;
}
.file_tab {
    width: 70px;
    margin-right: 4px;
    padding-top: 1px;
    border: 1px solid #1d6a26;
    border-bottom: 0;
    border-radius: 0 3px 0 0;
    background: linear-gradient(#4a9a46, #237f2b 50%, #2c8a30 70%, #6ab73f);
    color: #fff;
}
.tab {
    margin-right: 1px;
    padding: 2px 14px 0;
}
.tab.active {
    margin-bottom: -1px;
    padding: 1px 12px 0;
    border: 1px solid #b3bac2;
    border-bottom: 0;
    border-radius: 3px 3px 0 0;
    background-color: #fff;
    color: #555;
    z-index: 1;
}
.tab_tools {
    display: flex;
    align-items: center;
    margin-left: auto;
}
.mini_btn {
    display: flex;
    justify-content: center;
    width: 26px;
}
.mini_btn:last-child {
    width: 16px;
    margin-left: 5px;
}
/* ribbon */
.ribbon {
    display: flex;
    flex: none;
    border-top: 1px solid #b3bac2;
    border-bottom: 1px solid #7c8794;
    background: linear-gradient(#fff, #fdfdfe 60%, #e5e9ee);
}
.group {
    display: flex;
    flex-direction: column;
    border-right: 1px solid #b9bec5;
}
.group_body {
    display: flex;
    height: 84px;
}
.group_foot {
    display: flex;
    align-items: center;
    height: 21px;
    padding-top: 2px;
    color: #737880;
}
.group_foot span {
    flex: 1;
    text-align: center;
}
.launcher {
    width: 20px;
    padding-left: 6px;
}
.launcher svg {
    width: 10px;
    height: 10px;
}
.rows {
    display: flex;
    flex-direction: column;
    padding: 8px 0 4px;
}
.group_body.rows, .align_group .group_body {
    padding-left: 5px;
}
.row {
    display: flex;
    align-items: center;
    height: 36px;
}
.clipboard {
    width: 173px;
}
.font_group {
    width: 237px;
}
.align_group {
    width: 297px;
}
.number_group {
    width: 164px;
}
.styles_group {
    width: 567px;
}
.cells_group {
    width: 159px;
}
.editing_group {
    width: 202px;
}
.icon_btn {
    display: flex;
    flex: none;
    align-items: center;
    justify-content: center;
    width: 27px;
    height: 26px;
}
.drop_btn {
    display: flex;
    justify-content: center;
    width: 10px;
}
.sep {
    width: 1px;
    height: 20px;
    margin: 0 5px;
    background-color: #d0d3d8;
}
.sep.tall {
    height: 56px;
    margin: 14px 7px 0 2px;
}
.pressed {
    border: 1px solid #c2962f;
    border-radius: 3px;
    background: linear-gradient(#fcd477, #fbd35d 50%, #ffee8a);
}
.serif, .grow, .shrink, .font_color {
    font-family: "Liberation Serif", serif;
    font-size: 14px;
    color: #111;
}
.grow, .shrink {
    align-items: flex-start;
    padding-top: 6px;
}
.grow {
    font-size: 17px;
    line-height: 16px;
}
.shrink {
    font-size: 14px;
    line-height: 18px;
}
.grow svg, .shrink svg {
    margin-top: 1px;
}
.font_color {
    flex-direction: column;
    width: 20px;
    height: 18px;
    margin: 0 3px;
    border-bottom: 5px solid #f00;
    font-size: 17px;
    line-height: 13px;
    color: #2f5c9c;
}
.percent {
    font-size: 13px;
}
.comma {
    padding-bottom: 6px;
    font-size: 17px;
    color: #111;
}
/* drop-down boxes */
.combo {
    position: relative;
    height: 27px;
    border: 1px solid #c9ccd1;
    background-color: #fff;
}
.combo + .combo {
    border-left: 0;
}
.combo select {
    width: 100%;
    height: 25px;
    padding: 0 2px;
    appearance: none;
    color: #111;
}
.combo .caret {
    position: absolute;
    top: 12px;
    right: 4px;
}
.font_name {
    width: 120px;
}
.font_size {
    width: 55px;
}
.number_format {
    width: 155px;
}
.big_btn {
    display: flex;
    flex-direction: column;
    align-items: center;
    width: 50px;
    padding-top: 9px;
    line-height: 17px;
    text-align: center;
    white-space: nowrap;
}
.big_btn > svg:first-child {
    margin-bottom: 10px;
}
.big_btn > .caret {
    margin-top: 7px;
}
.big_btn span .caret {
    display: inline-block;
    margin-left: 6px;
    vertical-align: 4px;
}
.clipboard .big_btn {
    width: 56px;
}
.disabled {
    color: #a3a5a8;
}
.disabled .caret {
    opacity: .5;
}
.text_btns {
    display: flex;
    flex-direction: column;
    padding-top: 3px;
}
.text_btn {
    display: flex;
    align-items: center;
    height: 27px;
    padding-left: 3px;
    gap: 5px;
    white-space: nowrap;
}
.text_btn .caret {
    margin-left: 2px;
}
.wide_btns .text_btn {
    height: 36px;
    padding-left: 2px;
}
.editing_group .text_btns {
    width: 96px;
    padding-top: 2px;
    padding-left: 8px;
}
.editing_group .text_btn {
    height: 26px;
    gap: 6px;
}
.styles_group .group_body, .cells_group .group_body {
    padding-left: 4px;
}
.cond_btn {
    width: 78px;
}
.table_btn {
    width: 63px;
}
/* cell styles gallery */
.gallery {
    display: flex;
    height: 75px;
    margin: 5px 0 0 1px;
    border: 1px solid #c5c9cf;
    background-color: #fff;
}
.gallery_items {
    display: grid;
    grid-template-columns: repeat(3, 125px);
    grid-auto-rows: 27px;
    gap: 6px;
    padding: 6px 4px;
}
.style_item {
    padding: 0 4px 2px;
    font-family: Lato, sans-serif;
    font-size: 16px;
    line-height: 24px;
    text-align: left;
}
.normal {
    color: #111;
    border-radius: 1px;
    outline: 1px solid #c69230;
    outline-offset: 2px;
    box-shadow: 0 0 0 2px #ffe47c;
}
.bad {
    background-color: #ffc7ce;
    color: #9c0006;
}
.good {
    background-color: #c6efce;
    color: #206030;
}
.neutral {
    background-color: #ffeb9c;
    color: #9c6500;
}
.calculation {
    border: 1px solid #7f7f7f;
    background-color: #f2f2f2;
    color: #fa7d00;
    font-weight: bold;
}
.check_cell {
    padding: 0 2px 2px;
    border: 3px double #3f3f3f;
    background-color: #a5a5a5;
    color: #fff;
    font-weight: bold;
    line-height: 20px;
}
.gallery_scroll {
    display: flex;
    flex-direction: column;
    border-left: 1px solid #c5c9cf;
}
.gallery_scroll button {
    display: flex;
    flex: 1;
    align-items: center;
    justify-content: center;
    width: 16px;
}
.gallery_scroll button + button {
    border-top: 1px solid #c5c9cf;
}
.gray {
    background-color: #eee;
}
/* formula bar */
.formula_bar {
    display: flex;
    flex: none;
    height: 26px;
    margin: 3px 0;
    border-top: 1px solid #8d949f;
    border-bottom: 1px solid #8d949f;
    background-color: #fff;
    color: #111;
    font-size: 15px;
}
.name_box {
    display: flex;
    width: 182px;
    border-left: 1px solid #8d949f;
}
.name_box input {
    width: 157px;
    text-align: center;
}
.name_box button {
    display: flex;
    align-items: center;
    justify-content: center;
    width: 24px;
}
.fx_box {
    display: flex;
    align-items: center;
    justify-content: space-between;
    width: 101px;
    padding: 0 6px;
    border: 1px solid #9aa1ab;
    border-width: 0 1px 0 1px;
    border-radius: 12px 0 0 12px;
    background-color: #dde1e8;
}
.fx_dot {
    width: 9px;
    height: 9px;
    border-radius: 50%;
    background: linear-gradient(#b9bfc8, #f2f4f6);
}
.fx_btn {
    font-family: "Liberation Serif", serif;
    font-size: 18px;
    line-height: 20px;
    font-weight: bold;
    color: #444;
}
.fx_btn small {
    font-size: 14px;
    font-style: italic;
}
.formula_input {
    flex: 1;
    padding-left: 10px;
    font-size: 16px;
}
.expand_btn {
    display: flex;
    align-items: center;
    justify-content: center;
    width: 20px;
    border-left: 1px solid #9aa1ab;
    background-color: #dde1e8;
}
/* worksheet */
.sheet_area {
    display: flex;
    flex: 1;
    min-height: 0;
    border-top: 1px solid #7c8794;
    padding-right: 4px;
}
.sheet {
    position: relative;
    flex: 1;
    min-width: 0;
    overflow: hidden;
    background-color: #fff;
}
.cells {
    width: 1954px;
    table-layout: fixed;
    border-collapse: separate;
    border-spacing: 0;
    color: #111;
}
.cells th, .cells td {
    width: 80px;
    height: 24px;
    border-right: 1px solid #d6d7d9;
    border-bottom: 1px solid #d6d7d9;
    line-height: 22px;
    text-align: right;
    padding-right: 3px;
    font-size: 16px;
}
.cells th {
    border-color: #a8aeb7;
    background-color: #dde1e6;
    color: #333;
    font-size: 15px;
    font-weight: normal;
    text-align: center;
    padding: 0;
}
.cells .corner, .cells tbody th {
    width: 34px;
}
.cells .corner svg {
    margin: 2px 0 0 14px;
}
.cells th.picked {
    background: linear-gradient(#fbd96d, #fdd35a);
    border-color: #c2912b;
}
.cells td.active_cell {
    position: relative;
    outline: 3px solid #000;
    outline-offset: -1px;
}
.active_cell::after {
    content: "";
    position: absolute;
    right: -3px;
    bottom: -3px;
    width: 4px;
    height: 4px;
    background-color: #000;
    outline: 1px solid #fff;
}
.arrow {
    position: absolute;
    left: 116px;
    top: 79px;
}
.note {
    position: absolute;
    left: 153px;
    top: 72px;
    width: 235px;
    height: 36px;
    padding-left: 11px;
    border: 1px solid #e30613;
    background-color: #fff;
    font-size: 16px;
    line-height: 33px;
    color: #111;
}
/* scroll bars */
.v_scroll {
    display: flex;
    flex-direction: column;
    align-items: center;
    width: 20px;
    border-right: 1px solid #8d949f;
}
.v_scroll button {
    display: flex;
    align-items: center;
    justify-content: center;
    width: 19px;
    height: 21px;
}
.v_scroll .v_down {
    height: 22px;
    margin-top: 23px;
}
.split_h {
    width: 18px;
    height: 9px;
    border: 1px solid #7c8794;
    background: linear-gradient(#fff 3px, #9aa 3px, #9aa 4px, #fff 4px);
}
.v_thumb {
    display: flex;
    flex: 1;
    flex-direction: column;
    align-items: center;
    justify-content: center;
    gap: 1px;
    width: 19px;
    border: 1px solid #7c8794;
    background: linear-gradient(to right, #f4f6f8, #d5dae1);
}
.v_thumb i {
    width: 8px;
    height: 1px;
    background-color: #7c8794;
}
.sheet_bar {
    display: flex;
    flex: none;
    height: 22px;
    padding-right: 24px;
    border-top: 1px solid #9aa1ab;
    border-bottom: 2px solid #9197a3;
}
.sheet_nav {
    display: flex;
    align-items: center;
    width: 79px;
    border-right: 1px solid #9aa1ab;
}
.sheet_nav button {
    display: flex;
    justify-content: center;
    width: 19px;
}
.sheet_tabs {
    display: flex;
    flex: 1;
    align-items: flex-start;
}
.sheet_tab {
    width: 55px;
    height: 19px;
    border-bottom: 1px solid #a3a9b3;
    background-color: #e8ebf0;
    font-size: 14px;
    line-height: 18px;
    text-align: left;
}
.sheet_tab.current {
    width: 68px;
    padding-left: 8px;
    border-color: #fff;
    background-color: #fff;
    font-size: 15px;
    font-weight: bold;
}
.sheet_tab.add_tab {
    width: 16px;
    padding-bottom: 2px;
}
.slant {
    width: 14px;
    height: 19px;
}
.h_scroll {
    display: flex;
    width: 758px;
}
.split_v {
    width: 9px;
    border: 1px solid #7c8794;
    background: linear-gradient(to right, #fff 2px, #9aa 2px, #9aa 3px, #fff 3px);
}
.h_scroll button {
    display: flex;
    align-items: center;
    justify-content: center;
    width: 21px;
}
.h_scroll .h_right {
    margin-left: 32px;
}
.h_thumb {
    display: flex;
    flex: 1;
    align-items: center;
    justify-content: center;
    gap: 1px;
    border: 1px solid #8d949f;
    border-width: 0 1px 1px 1px;
    background: linear-gradient(#f1f4f6, #d9dde3);
}
.h_thumb i {
    width: 1px;
    height: 7px;
    background-color: #7c8794;
}
/* status bar */
.status_bar {
    display: flex;
    flex: none;
    justify-content: space-between;
    height: 25px;
    background: linear-gradient(#eceef0, #c0c4c9);
}
.ready {
    padding: 4px 9px 0 8px;
    border-right: 1px solid #8b9099;
    line-height: 17px;
}
.view_tools {
    display: flex;
    align-items: center;
    padding: 0 4px;
    border-left: 1px solid #9a9fa6;
}
.view_btn {
    display: flex;
    align-items: center;
    justify-content: center;
    width: 23px;
    height: 24px;
}
.zoom_text {
    width: 50px;
    text-align: center;
}
.zoom_btn {
    display: flex;
    align-items: center;
    justify-content: center;
    width: 20px;
    height: 20px;
    border: 1px solid #848b8f;
    border-radius: 50%;
    background-color: #f2f3f4;
}
.zoom_range {
    width: 125px;
    height: 20px;
    appearance: none;
    background: linear-gradient(#8d9a9c, #8d9a9c) center / 100% 1px no-repeat;
}
.zoom_range::-webkit-slider-thumb {
    width: 11px;
    height: 16px;
    appearance: none;
    border: 1px solid #6d7c80;
    border-radius: 1px 1px 5px 5px;
    background-color: #f2f5f5;
}
/* taskbar */
.taskbar {
    display: flex;
    justify-content: space-between;
    height: 48px;
    border-top: 1px solid #14303f;
    box-shadow: inset 0 1px #88b1c9;
}
.tasks, .tray {
    display: flex;
    align-items: center;
}
.start_btn {
    width: 69px;
    padding-left: 11px;
}
.task {
    display: flex;
    align-items: center;
    justify-content: center;
    width: 66px;
    height: 46px;
    margin: 0 2px;
}
.open {
    border: 1px solid #c9dbe6;
    border-radius: 3px;
    outline: 1px solid #12354c;
    background: linear-gradient(135deg, #9bb8ca, #54819d 50%, #1f5273);
}
.stacked {
    width: 59px;
    background: linear-gradient(135deg, #eef4f7, #a9c2d1 60%, #7fa3b9);
    box-shadow: 3px 0 #7fa3b9, 4px 0 #12354c, 7px 0 #6792ad;
    margin-right: 9px;
}
.tray_icons {
    display: flex;
    align-items: center;
    gap: 10px;
    padding-right: 8px;
}
.tray_icons svg:first-child {
    margin-right: 11px;
}
.tray_icons svg:nth-child(2) {
    margin-right: 8px;
}
.clock {
    width: 88px;
    color: #fff;
    font-size: 14px;
    line-height: 22px;
    text-align: center;
}
.show_desktop {
    width: 14px;
    height: 47px;
    border: 1px solid #7f9aaa;
    background: linear-gradient(135deg, #8ba2b0, #2f566d);
}
```
FILE: script.js
```js
const cols = "ABCDEFGHIJKLMNOPQRSTUVWX".split("");
const values = { A1: "-15", A2: "10", A3: "10" };
const heads = document.querySelector("#col_heads");
const rows = document.querySelector("#rows");
// column letters
cols.forEach(name => {
    const th = document.createElement("th");
    th.textContent = name;
    if (name == "A") th.className = "picked";
    heads.appendChild(th);
});
// numbered rows
for (let i = 1; i <= 32; i++) {
    const tr = document.createElement("tr");
    const th = document.createElement("th");
    th.textContent = i;
    if (i == 3) th.className = "picked";
    tr.appendChild(th);
    cols.forEach(name => {
        const td = document.createElement("td");
        td.textContent = values[name + i] || "";
        if (name + i == "A3") td.className = "active_cell";
        tr.appendChild(td);
    });
    rows.appendChild(tr);
}
```
